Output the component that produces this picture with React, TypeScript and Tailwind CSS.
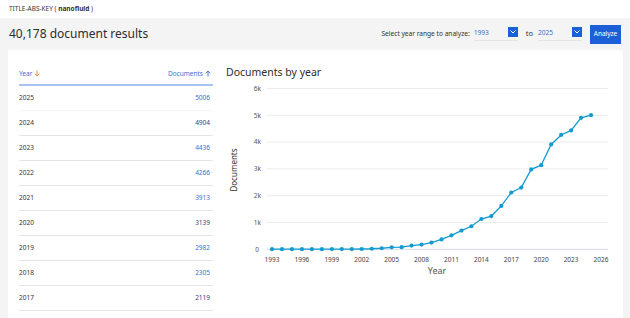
import React from "react";

const rows: [string, string, string][] = [
  ["2025", "5006", "text-[#3b6fd6]"],
  ["2024", "4904", "text-[#2a3f8f]"],
  ["2023", "4436", "text-[#3b6fd6]"],
  ["2022", "4266", "text-[#3b6fd6]"],
  ["2021", "3913", "text-[#3b6fd6]"],
  ["2020", "3139", "text-[#2a3f8f]"],
  ["2019", "2982", "text-[#3b6fd6]"],
  ["2018", "2305", "text-[#3b6fd6]"],
  ["2017", "2119", "text-[#2a3f8f]"],
];

const values = [
  3, 4, 5, 5, 6, 6, 7, 8, 10, 12, 20, 40, 75, 80, 140, 175, 250, 370, 520,
  700, 860, 1130, 1240, 1620, 2119, 2305, 2982, 3139, 3913, 4266, 4436, 4904,
  5006,
];

const xOf = (i: number) => 57 + i * 9.97;
const yOf = (v: number) => 169.3 - v * 0.0268;

function Chevron() {
  return (
    <span className="absolute right-0 top-[-1px] flex h-[10px] w-[10px] items-center justify-center bg-[#1d5fd6]">
      <svg width="6" height="4" viewBox="0 0 6 4">
        <path d="M0.5 0.5 L3 3 L5.5 0.5" stroke="white" strokeWidth="1" fill="none" />
      </svg>
    </span>
  );
}

function Arrow({ up, color }: { up?: boolean; color: string }) {
  return (
    <svg width="6" height="7" viewBox="0 0 6 7" className="ml-[2px] inline-block" style={{ transform: up ? "rotate(180deg)" : undefined }}>
      <path d="M3 0.5 V6 M0.7 3.7 L3 6 L5.3 3.7" stroke={color} strokeWidth="0.9" fill="none" />
    </svg>
  );
}

function Chart() {
  const pts = values.map((v, i) => `${xOf(i)},${yOf(v)}`).join(" ");
  const ticks = [0, 1, 2, 3, 4, 5, 6];
  const years = [1993, 1996, 1999, 2002, 2005, 2008, 2011, 2014, 2017, 2020, 2023, 2026];
  return (
    <svg width="408" height="215" viewBox="0 0 408 215" className="block">
      {ticks.map((t) => (
        <g key={t}>
          <line
            x1="52"
            x2="393"
            y1={yOf(t * 1000)}
            y2={yOf(t * 1000)}
            stroke={t === 0 ? "#d9dbe3" : "#ececec"}
            strokeWidth="1"
          />
          <text
            x={t === 0 ? 44 : 46}
            y={yOf(t * 1000) + 2.3}
            textAnchor="end"
            fontSize="6.5"
            fill="#555"
            fontFamily="'Noto Sans', sans-serif"
          >
            {t === 0 ? "0" : `${t}k`}
          </text>
        </g>
      ))}
      {years.map((y) => (
        <text
          key={y}
          x={xOf(y - 1993)}
          y={181.5}
          textAnchor="middle"
          fontSize="6.5"
          fill="#444"
          fontFamily="'Noto Sans', sans-serif"
        >
          {y}
        </text>
      ))}
      <polyline points={pts} fill="none" stroke="#139bd1" strokeWidth="1.3" />
      {values.map((v, i) => (
        <circle key={i} cx={xOf(i)} cy={yOf(v)} r="2.1" fill="#139bd1" />
      ))}
      <text
        x="222"
        y="194"
        textAnchor="middle"
        fontSize="9"
        fill="#555"
        fontFamily="'Noto Sans', sans-serif"
      >
        Year
      </text>
      <text
        x="22"
        y="90"
        transform="rotate(-90 22 90)"
        textAnchor="middle"
        fontSize="8"
        fill="#333"
        fontFamily="'Noto Sans', sans-serif"
      >
        Documents
      </text>
    </svg>
  );
}

export default function App() {
  return (
    <div
      className="flex h-[318px] w-[630px] flex-col overflow-hidden bg-[#f4f4f4] text-[#2e2e2e]"
      style={{ fontFamily: "'Noto Sans', 'Open Sans', sans-serif" }}
    >
      <div className="flex h-[18px] shrink-0 items-center bg-white pl-[9px] text-[6.5px] text-[#333]">
        TITLE-ABS-KEY ( <span className="font-bold">&nbsp;nanofluid&nbsp;</span> )
      </div>
      <div className="flex h-[32px] shrink-0 items-center justify-between pl-[9px] pr-[9px]">
        <div className="text-[12px] leading-none text-[#2e2e2e]">40,178 document results</div>
        <div className="flex items-center text-[6.6px] text-[#333]">
          <span className="mr-[4px]">Select year range to analyze:</span>
          <div className="relative h-[13px] w-[44px] border-b border-[#e3e3e3] text-[#3b6fd6]">
            1993
            <Chevron />
          </div>
          <span className="ml-[8px] mr-[5px] text-[7.5px]">to</span>
          <div className="relative h-[13px] w-[44px] border-b border-[#e3e3e3] text-[#3b6fd6]">
            2025
            <Chevron />
          </div>
          <button className="ml-[8px] flex h-[19px] w-[31px] items-center justify-center bg-[#1d5fd6] text-[6.5px] text-white">
            Analyze
          </button>
        </div>
      </div>
      <div className="ml-[8px] flex w-[615px] flex-1 bg-white">
        <div className="w-[205px] shrink-0 pl-[11px] pt-[16px]">
          <div className="flex h-[20px] items-start justify-between border-b-2 border-[#a8c4f2] pt-[3px] text-[6.5px] text-[#3b6fd6]">
            <span className="flex items-center">
              Year <Arrow color="#e8822b" />
            </span>
            <span className="flex items-center pr-[2px]">
              Documents <Arrow up color="#3b6fd6" />
            </span>
          </div>
          {rows.map(([y, c, cls], i) => (
            <div
              key={y}
              className={`flex h-[25px] items-center justify-between border-b text-[6.5px] ${
                i === 0 ? "border-[#f5f5f5]" : "border-[#e6e6e6]"
              }`}
            >
              <span className="text-[#333]">{y}</span>
              <span className={`pr-[3px] ${cls}`}>{c}</span>
            </div>
          ))}
        </div>
        <div className="flex flex-col pl-[2px]">
          <div className="pl-[11px] pt-[15px] text-[10.5px] leading-[15px] text-[#2e2e2e]">
            Documents by year
          </div>
          <Chart />
        </div>
      </div>
    </div>
  );
}
